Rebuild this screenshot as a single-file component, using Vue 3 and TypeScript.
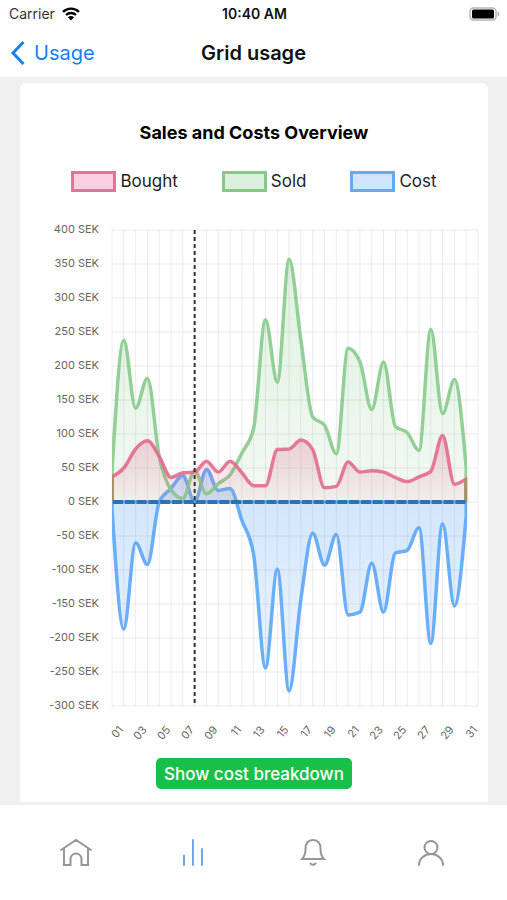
<script setup lang="ts">
interface Point {
  x: number
  y: number
}

interface Series {
  key: string
  label: string
  values: number[]
}

const plot = { left: 92, right: 458, top: 12, bottom: 488 }
const range = { min: -300, max: 400, step: 50 }
const days = 31

const xOf = (i: number): number => plot.left + ((plot.right - plot.left) * i) / days
const yOf = (v: number): number =>
  plot.top + ((plot.bottom - plot.top) * (range.max - v)) / (range.max - range.min)

const series: Series[] = [
  {
    key: 'cost',
    label: 'Cost',
    values: [-10, -187, -60, -92, 0, 20, 39, 0, 48, 17, 20, -27, -78, -244, -99, -278, -143, -46, -93, -48,
      -166, -162, -90, -162, -75, -71, -38, -208, -32, -153, -20],
  },
  {
    key: 'sold',
    label: 'Sold',
    values: [45, 238, 138, 182, 67, 18, 5, 46, 12, 27, 40, 72, 109, 268, 176, 357, 238, 125, 113, 71,
      226, 206, 136, 206, 111, 102, 76, 254, 130, 180, 50],
  },
  {
    key: 'bought',
    label: 'Bought',
    values: [37, 50, 78, 90, 67, 36, 43, 44, 60, 44, 60, 43, 24, 24, 77, 78, 91, 77, 21, 23,
      59, 44, 46, 44, 36, 30, 37, 45, 98, 26, 34],
  },
]

const legend = [...series].reverse()

// Monotone cubic interpolation: the curve never overshoots a data point.
function curve(points: Point[]): string {
  const n = points.length
  const slopes: number[] = []
  for (let i = 0; i < n - 1; i++) {
    slopes.push((points[i + 1].y - points[i].y) / (points[i + 1].x - points[i].x))
  }
  const tangents: number[] = new Array(n).fill(0)
  for (let i = 1; i < n - 1; i++) {
    const a = slopes[i - 1]
    const b = slopes[i]
    if (a * b > 0) {
      tangents[i] = Math.sign(a) * Math.min(Math.abs(a), Math.abs(b), Math.abs(a + b) / 4) * 2
    }
  }
  tangents[0] = (3 * slopes[0] - tangents[1]) / 2
  tangents[n - 1] = (3 * slopes[n - 2] - tangents[n - 2]) / 2

  let d = ''
  for (let i = 0; i < n - 1; i++) {
    const p = points[i]
    const q = points[i + 1]
    const h = (q.x - p.x) / 3
    const c = [p.x + h, p.y + h * tangents[i], q.x - h, q.y - h * tangents[i + 1], q.x, q.y]
    d += ' C' + c.map((v) => v.toFixed(1)).join(' ')
  }
  return d
}

function areaPath(values: number[]): string {
  const pts = values.map((v, i) => ({ x: xOf(i), y: yOf(v) }))
  const last = pts[pts.length - 1]
  return `M${pts[0].x} ${yOf(0)} L${pts[0].x} ${pts[0].y}${curve(pts)} L${last.x} ${yOf(0)}`
}

const shapes = series.map((s) => ({ key: s.key, d: areaPath(s.values) }))

const rows: { y: number; text: string }[] = []
for (let v = range.max; v >= range.min; v -= range.step) {
  rows.push({ y: yOf(v), text: `${v} SEK` })
}

const columns = Array.from({ length: days + 1 }, (_, i) => ({
  x: xOf(i),
  text: i % 2 ? String(i).padStart(2, '0') : '',
}))
const labelled = columns.filter((c) => c.text)
const baseline = columns.slice(0, -2)
const edges = [
  { x: xOf(0), y: yOf(37) },
  { x: xOf(30), y: yOf(34) },
]
const today = xOf(7)
</script>

<template>
  <div class="screen">
    <div class="status">
      <span class="carrier">
        Carrier
        <svg class="wifi" viewBox="0 0 18 14" aria-hidden="true">
          <path d="M1 4.8a11.6 11.6 0 0 1 16 0" />
          <path d="M4 8a7.2 7.2 0 0 1 10 0" />
          <path class="solid" d="M9 13.6 5.9 10.3a4.6 4.6 0 0 1 6.2 0z" />
        </svg>
      </span>
      <span class="clock">10:40 AM</span>
      <svg class="battery" viewBox="0 0 31 14" aria-hidden="true">
        <rect class="shell" x="1" y="1" width="26" height="12" rx="3.5" />
        <rect x="3" y="2.5" width="22" height="9" rx="1.5" />
        <path class="cap" d="M28.5 4.5q2 .8 2 2.5t-2 2.5z" />
      </svg>
    </div>

    <header class="nav">
      <a class="back" href="#usage">
        <svg viewBox="0 0 16 26" aria-hidden="true"><path d="M13.500 2 3 13l10.500 11" /></svg>
        Usage
      </a>
      <h1>Grid usage</h1>
    </header>

    <main class="content">
      <section class="card">
        <h2>Sales and Costs Overview</h2>
        <ul class="legend">
          <li v-for="s in legend" :key="s.key">
            <span class="swatch" :class="s.key"></span>{{ s.label }}
          </li>
        </ul>

        <svg class="chart" viewBox="0 0 468 530" role="img" aria-label="Sales and Costs Overview">
          <defs>
            <linearGradient id="fill-bought" x1="0" y1="0" x2="0" y2="1">
              <stop offset="0" stop-color="#e0557f" stop-opacity="0.26" />
              <stop offset="1" stop-color="#e0557f" stop-opacity="0.06" />
            </linearGradient>
            <linearGradient id="fill-sold" x1="0" y1="0" x2="0" y2="1">
              <stop offset="0" stop-color="#81c784" stop-opacity="0.24" />
              <stop offset="1" stop-color="#81c784" stop-opacity="0.1" />
            </linearGradient>
            <linearGradient id="fill-cost" x1="0" y1="0" x2="0" y2="1">
              <stop offset="0" stop-color="#5ba4f5" stop-opacity="0.3" />
              <stop offset="1" stop-color="#5ba4f5" stop-opacity="0.1" />
            </linearGradient>
            <clipPath id="plot-area">
              <rect :x="xOf(0)" :y="plot.top" :width="xOf(30) - xOf(0) + 1" :height="plot.bottom - plot.top" />
            </clipPath>
          </defs>

          <g class="grid">
            <line v-for="r in rows" :key="r.y" :x1="plot.left" :x2="plot.right" :y1="r.y" :y2="r.y" />
            <line v-for="c in columns" :key="c.x" :x1="c.x" :x2="c.x" :y1="plot.top" :y2="plot.bottom" />
          </g>

          <g clip-path="url(#plot-area)">
            <path
              v-for="s in shapes"
              :key="s.key"
              class="area"
              :class="s.key"
              :d="s.d"
              :fill="`url(#fill-${s.key})`"
            />
            <line
              v-for="e in edges"
              :key="e.x"
              class="edge"
              :x1="e.x"
              :x2="e.x"
              :y1="e.y"
              :y2="yOf(0)"
            />
          </g>

          <line class="zero-base" :x1="xOf(0)" :x2="xOf(30)" :y1="yOf(0)" :y2="yOf(0)" />
          <g class="zero">
            <line v-for="c in baseline" :key="c.x" :x1="c.x + 1" :x2="c.x + 11" :y1="yOf(0)" :y2="yOf(0)" />
          </g>
          <line class="today" :x1="today" :x2="today" :y1="plot.top" :y2="plot.bottom" />

          <g class="amounts">
            <text v-for="r in rows" :key="r.y" x="79" :y="r.y + 3">{{ r.text }}</text>
          </g>
          <g class="dates">
            <text
              v-for="c in labelled"
              :key="c.x"
              :transform="`translate(${c.x} 512) rotate(-50)`"
            >{{ c.text }}</text>
          </g>
        </svg>

        <button class="breakdown" type="button">Show cost breakdown</button>
      </section>
    </main>

    <nav class="tabs" aria-label="Main">
      <a href="#home" aria-label="Home">
        <svg viewBox="0 0 34 34">
          <path d="M2 14 17 4l15 10M5 12.500V29h6.500v-6a5.500 5.500 0 0 1 11 0v6H29V12.500" />
        </svg>
      </a>
      <a class="active" href="#usage" aria-label="Usage">
        <svg viewBox="0 0 34 34">
          <path d="M7 19.500V29M16 4v25M25 13v16" />
        </svg>
      </a>
      <a href="#alerts" aria-label="Notifications">
        <svg viewBox="0 0 34 34">
          <path d="M6 23c3-3 3.500-6 3.500-10 0-6 3-9 7.500-9s7.500 3 7.500 9c0 4 .5 7 3.500 10z" />
          <path d="M14.500 27.500q2.500 2.500 5 0" />
        </svg>
      </a>
      <a href="#profile" aria-label="Profile">
        <svg viewBox="0 0 34 34">
          <circle cx="17" cy="11.500" r="6.500" />
          <path d="M5 29a12 11 0 0 1 24 0" />
        </svg>
      </a>
    </nav>
  </div>
</template>

<style>
body {
  background: #fff;
}
</style>

<style scoped>
.screen {
  display: flex;
  flex-direction: column;
  min-height: 100vh;
  background: #fff;
  color: #111;
  font-family: Inter, Roboto, sans-serif;
}

.status {
  display: grid;
  grid-template-columns: 1fr auto 1fr;
  align-items: center;
  height: 27px;
  padding: 0 7px 0 9px;
  font-size: 14px;
}

.carrier {
  display: flex;
  align-items: center;
  gap: 7px;
  color: #333;
}

.wifi {
  width: 18px;
  height: 14px;
  fill: none;
  stroke: #000;
  stroke-width: 2.4;
}

.wifi .solid {
  fill: #000;
  stroke: none;
}

.clock {
  font-weight: 600;
}

.battery {
  justify-self: end;
  width: 31px;
  height: 14px;
}

.battery .shell {
  fill: #fff;
  stroke: #b5b5b5;
  stroke-width: 1.5;
}

.battery .cap {
  fill: #b5b5b5;
}

.nav {
  display: grid;
  grid-template-columns: 1fr auto 1fr;
  align-items: center;
  height: 51px;
  padding: 2px 10px 0;
  border-bottom: 1px solid #f0f0f0;
  box-sizing: border-box;
}

.nav h1 {
  margin: 0;
  font-size: 20px;
  font-weight: 600;
}

.back {
  display: flex;
  align-items: center;
  gap: 8px;
  color: #1480fb;
  font-size: 20px;
  text-decoration: none;
}

.back svg {
  width: 16px;
  height: 26px;
  fill: none;
  stroke: currentColor;
  stroke-width: 3;
}

.content {
  flex: 1;
  padding: 5px 19px 3px 20px;
  background: #f0f0f0;
}

.card {
  display: flex;
  flex-direction: column;
  align-items: center;
  padding: 39px 0 13px;
  border-radius: 6px 6px 0 0;
  background: #fff;
}

.card h2 {
  margin: 0;
  color: #000;
  font-size: 18px;
  font-weight: 700;
  line-height: 22px;
}

.legend {
  display: flex;
  justify-content: center;
  gap: 44px;
  margin: 25px 0 0;
  padding: 0;
  color: #222;
  font-size: 17px;
  line-height: 24px;
  list-style: none;
}

.legend li {
  display: flex;
  align-items: center;
  gap: 4px;
}

.swatch {
  width: 45px;
  height: 21px;
  border: 3px solid;
  box-sizing: border-box;
}

.swatch.bought {
  border-color: #e8719a;
  background: #fbd0e0;
}

.swatch.sold {
  border-color: #86c98b;
  background: #dbf0dc;
}

.swatch.cost {
  border-color: #66aaf0;
  background: #cfe5fd;
}

.chart {
  display: block;
  width: 100%;
  margin-top: 25px;
}

.grid line {
  stroke: #000;
  stroke-opacity: 0.08;
}

.area {
  stroke-width: 3.5;
  stroke-linejoin: round;
  stroke-opacity: 0.9;
}

.area.cost {
  stroke: #5ba6f8;
}

.area.sold {
  stroke: #86cb8c;
}

.area.bought {
  stroke: #e26b8d;
}

.edge {
  stroke: #a5946a;
  stroke-width: 4;
}

.zero-base {
  stroke: #6ea3d4;
  stroke-width: 3;
}

.zero line {
  stroke: #2a73b5;
  stroke-width: 4;
}

.today {
  stroke: #333;
  stroke-width: 2;
  stroke-dasharray: 4 3;
}

.amounts text,
.dates text {
  fill: #666;
  font-size: 11px;
  text-anchor: end;
}

.breakdown {
  height: 31px;
  margin-top: 10px;
  padding: 0 8px;
  border: 0;
  border-radius: 5px;
  background: #18c04a;
  color: #fff;
  font: 500 17px Inter, Roboto, sans-serif;
}

.tabs {
  display: flex;
  height: 95px;
  padding: 0 17px;
  background: #fff;
}

.tabs a {
  display: flex;
  flex: 1;
  align-items: center;
  justify-content: center;
  color: #969699;
}

.tabs a.active {
  color: #6aaaf0;
}

.tabs svg {
  width: 34px;
  height: 34px;
  fill: none;
  stroke: currentColor;
  stroke-width: 2;
  stroke-linecap: round;
}
</style>
